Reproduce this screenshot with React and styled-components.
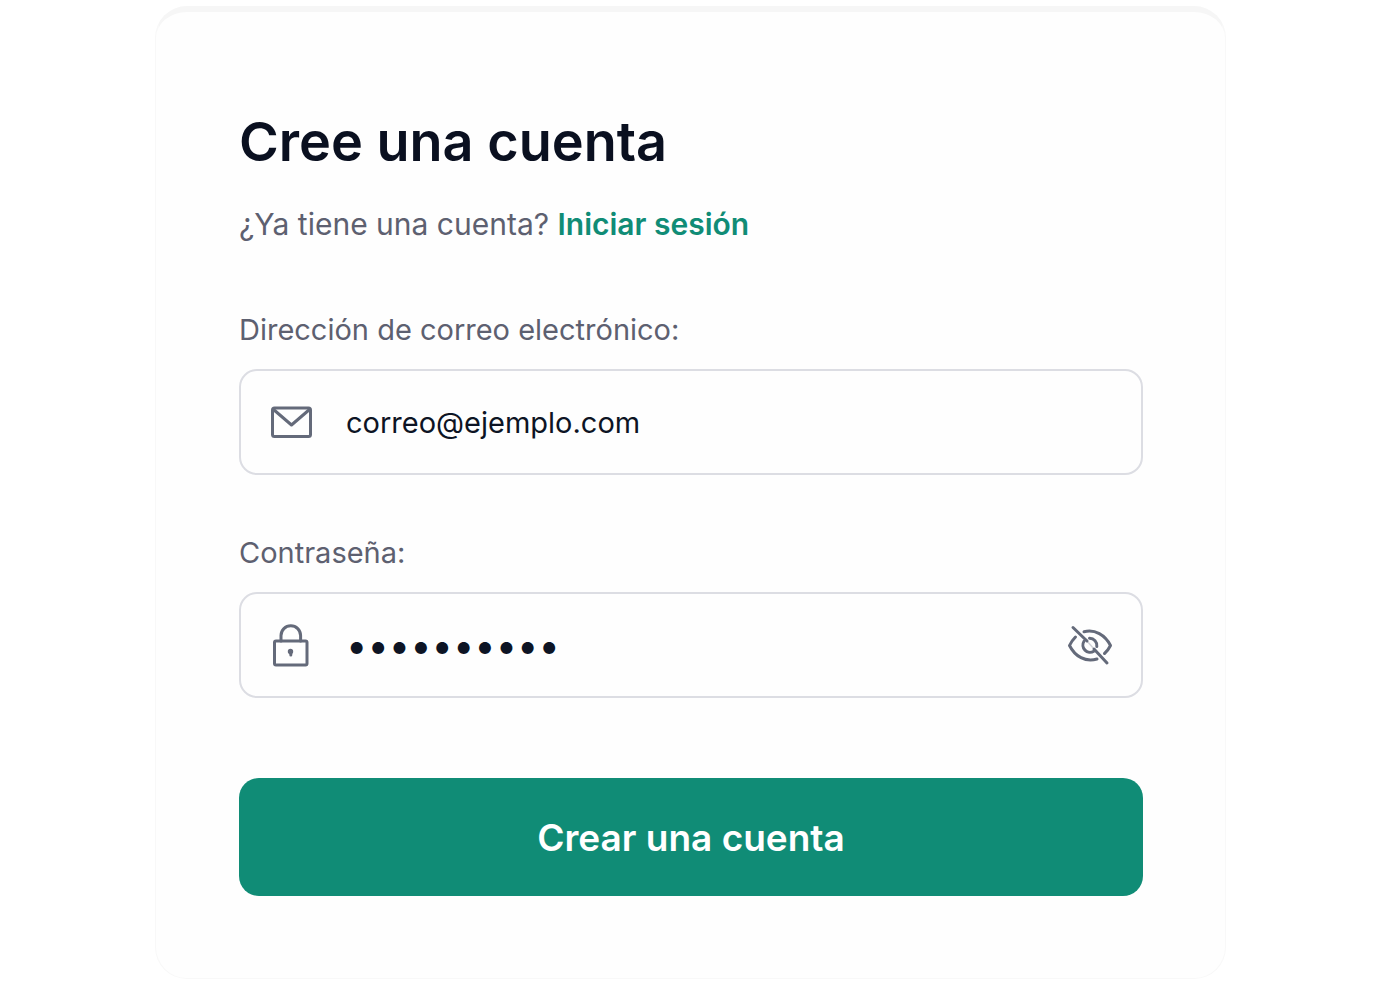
import React, { useState } from 'react';
import styled, { createGlobalStyle } from 'styled-components';

const GlobalStyle = createGlobalStyle`
  *, *::before, *::after { box-sizing: border-box; }
  body {
    margin: 0;
    background: #ffffff;
    font-family: Inter, "Liberation Sans", sans-serif;
  }
`;

const Page = styled.main`
  display: flex;
  justify-content: center;
  padding: 6px 158px 16px 155px;

  @media (max-width: 900px) {
    padding: 6px 16px 16px;
  }
`;

const Card = styled.form`
  flex: 1;
  max-width: 1200px;
  display: flex;
  flex-direction: column;
  padding: 98px 82px 82px 83px;
  background: #fefefe;
  border: 1px solid #f8f8f8;
  border-top: 6px solid #f6f6f6;
  border-radius: 32px;

  @media (max-width: 900px) {
    padding: 48px 24px;
  }
`;

const Title = styled.h1`
  margin: 0;
  font-size: 54px;
  line-height: 64px;
  font-weight: 600;
  color: #0a1020;
`;

const Subtitle = styled.p`
  margin: 30px 0 66px;
  font-size: 30px;
  line-height: 40px;
  color: #5d6070;
`;

const SignInLink = styled.a`
  font-weight: 600;
  color: #108c76;
  text-decoration: none;
`;

const Field = styled.div`
  display: flex;
  flex-direction: column;
  gap: 19px;
  margin-bottom: ${({ $last }) => ($last ? 80 : 58)}px;
`;

const Label = styled.label`
  font-size: 29px;
  line-height: 40px;
  color: #5d6070;
`;

const InputBox = styled.div`
  display: flex;
  align-items: center;
  height: 106px;
  padding: 0 28px;
  border: 2px solid #dcdde3;
  border-radius: 18px;
  color: #646a7a;

  svg { flex: none; }
`;

const TextInput = styled.input`
  flex: 1;
  min-width: 0;
  height: 48px;
  margin: 0 0 0 31px;
  padding: 0;
  border: 0;
  outline: 0;
  background: transparent;
  font-family: inherit;
  font-size: ${({ $size }) => $size}px;
  color: #0d1424;
`;

const IconButton = styled.button`
  display: flex;
  padding: 0;
  border: 0;
  background: none;
  color: inherit;
  cursor: pointer;
`;

const SubmitButton = styled.button`
  height: 118px;
  border: 0;
  border-radius: 20px;
  background: #108c76;
  color: #ffffff;
  font-family: inherit;
  font-size: 37px;
  font-weight: 600;
  cursor: pointer;
`;

const Stroke = ({ children }) => (
  <svg width="46" height="46" viewBox="0 0 46 46" fill="none" stroke="currentColor"
    strokeWidth="3" strokeLinecap="round" strokeLinejoin="round" aria-hidden="true">
    {children}
  </svg>
);

const MailIcon = () => (
  <Stroke>
    <rect x="3.5" y="9" width="38" height="28.5" rx="2" />
    <path d="M4.5 10.5 L22.5 26 L40.5 10.5" />
  </Stroke>
);

const LockIcon = () => (
  <Stroke>
    <rect x="5.5" y="19" width="32.5" height="24" rx="1.5" />
    <path d="M12 19 V13.500 a9.800 9.800 0 0 1 19.600 0 V19" />
    <path d="M21.800 29.500 V33" />
    <circle cx="21.500" cy="29.500" r="1.200" />
  </Stroke>
);

const EyeOffIcon = () => (
  <Stroke>
    <path d="M6 5.500 L20 19 M27 27 L40 41" />
    <path d="M8.500 15 Q4.500 19 2.500 23.500 C8 34.500 18.500 40.500 30 37" />
    <path d="M17 9.800 C28 7 38 13 43.500 23.500 Q41 28.500 37.500 31.500" />
    <path d="M17 19.300 A7.200 7.200 0 0 0 26.800 29.300" />
    <path d="M22.500 16.300 A7.200 7.200 0 0 1 29.800 24.500" />
    <path d="M20 19 L27 27" strokeWidth="1.500" opacity="0.300" />
  </Stroke>
);

export default function App() {
  const [email, setEmail] = useState('correo@ejemplo.com');
  const [password, setPassword] = useState('contrasena');
  const [visible, setVisible] = useState(false);

  return (
    <>
      <GlobalStyle />
      <Page>
        <Card onSubmit={(e) => e.preventDefault()}>
          <Title>Cree una cuenta</Title>
          <Subtitle>
            ¿Ya tiene una cuenta? <SignInLink href="#login">Iniciar sesión</SignInLink>
          </Subtitle>
          <Field>
            <Label htmlFor="email">Dirección de correo electrónico:</Label>
            <InputBox>
              <MailIcon />
              <TextInput id="email" type="email" $size={29} value={email}
                onChange={(e) => setEmail(e.target.value)} />
            </InputBox>
          </Field>
          <Field $last>
            <Label htmlFor="password">Contraseña:</Label>
            <InputBox>
              <LockIcon />
              <TextInput id="password" type={visible ? 'text' : 'password'} $size={visible ? 29 : 38}
                value={password} onChange={(e) => setPassword(e.target.value)} />
              <IconButton type="button" aria-label="Mostrar contraseña" onClick={() => setVisible(!visible)}>
                <EyeOffIcon />
              </IconButton>
            </InputBox>
          </Field>
          <SubmitButton type="submit">Crear una cuenta</SubmitButton>
        </Card>
      </Page>
    </>
  );
}
